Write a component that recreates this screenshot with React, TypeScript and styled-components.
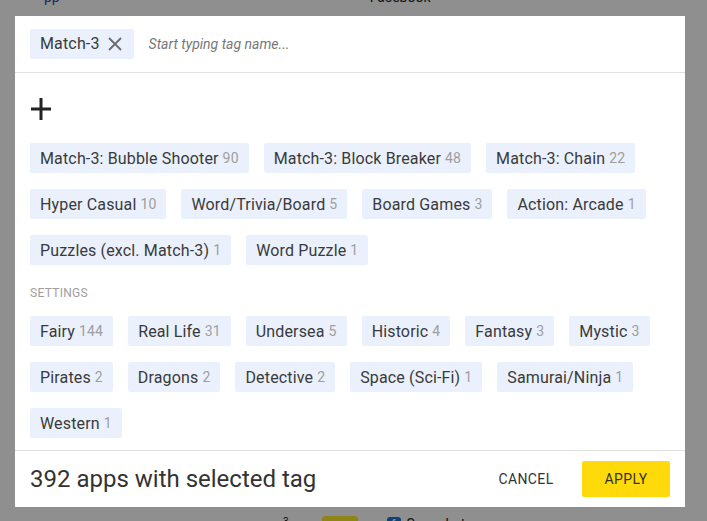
import React from 'react';
import styled, { createGlobalStyle } from 'styled-components';

type Tag = { name: string; count: number };

const genres: Tag[] = [
  { name: 'Match-3: Bubble Shooter', count: 90 },
  { name: 'Match-3: Block Breaker', count: 48 },
  { name: 'Match-3: Chain', count: 22 },
  { name: 'Hyper Casual', count: 10 },
  { name: 'Word/Trivia/Board', count: 5 },
  { name: 'Board Games', count: 3 },
  { name: 'Action: Arcade', count: 1 },
  { name: 'Puzzles (excl. Match-3)', count: 1 },
  { name: 'Word Puzzle', count: 1 },
];

const settings: Tag[] = [
  { name: 'Fairy', count: 144 },
  { name: 'Real Life', count: 31 },
  { name: 'Undersea', count: 5 },
  { name: 'Historic', count: 4 },
  { name: 'Fantasy', count: 3 },
  { name: 'Mystic', count: 3 },
  { name: 'Pirates', count: 2 },
  { name: 'Dragons', count: 2 },
  { name: 'Detective', count: 2 },
  { name: 'Space (Sci-Fi)', count: 1 },
  { name: 'Samurai/Ninja', count: 1 },
  { name: 'Western', count: 1 },
];

const App: React.FC = () => {
  return (
    <>
      <GlobalStyle />
      <Page>
        <PageRow>
          <BlueText>pp</BlueText>
          <DarkText style={{ marginLeft: 310 }}>Facebook</DarkText>
        </PageRow>
        <PageRow>
          <Sup style={{ marginLeft: 283 }}>3</Sup>
          <Arrow>▲</Arrow>
          <YellowBox />
          <Play>▶</Play>
          <AppIcon>f</AppIcon>
          <DarkText>Snapchat</DarkText>
        </PageRow>
      </Page>

      <Overlay>
        <Dialog>
          <Header>
            <SelectedChip>
              Match-3
              <svg width='14' height='14' viewBox='0 0 14 14'>
                <path d='M1 1 L13 13 M13 1 L1 13' stroke='#6b6b6b' strokeWidth='1.8' fill='none' />
              </svg>
            </SelectedChip>
            <SearchInput placeholder='Start typing tag name...' />
          </Header>

          <Body>
            <PlusIcon width='20' height='22' viewBox='0 0 20 22'>
              <path d='M0 11 H20 M10 0 V22' stroke='#222' strokeWidth='3' fill='none' />
            </PlusIcon>
            <ChipList>
              {genres.map((t) => (
                <Chip key={t.name}>
                  {t.name}
                  <Count>{t.count}</Count>
                </Chip>
              ))}
            </ChipList>
            <GroupLabel>Settings</GroupLabel>
            <ChipList>
              {settings.map((t) => (
                <Chip key={t.name}>
                  {t.name}
                  <Count>{t.count}</Count>
                </Chip>
              ))}
            </ChipList>
          </Body>

          <Footer>
            <Summary>392 apps with selected tag</Summary>
            <Actions>
              <TextButton>Cancel</TextButton>
              <ApplyButton>Apply</ApplyButton>
            </Actions>
          </Footer>
        </Dialog>
      </Overlay>
    </>
  );
};

export default App;

const GlobalStyle = createGlobalStyle`
  html, body {
    margin: 0;
    padding: 0;
    background: #fff;
    font-family: Roboto, 'Liberation Sans', sans-serif;
    overflow: hidden;
  }
  * {
    box-sizing: border-box;
  }
`;

const Page = styled.div`
  height: 100vh;
  display: flex;
  flex-direction: column;
  justify-content: space-between;
`;
const PageRow = styled.div`
  display: flex;
  align-items: center;
  height: 16px;
  font-size: 14px;
  &:first-child {
    margin-top: -11px;
  }
  &:last-child {
    margin-bottom: -11px;
  }
`;
const BlueText = styled.span`
  margin-left: 44px;
  color: #2a4fb0;
`;
const DarkText = styled.span`
  color: #222;
`;
const Sup = styled.span`
  color: #222;
  font-size: 10px;
  align-self: flex-start;
`;
const Arrow = styled.span`
  color: #1b8a2a;
  font-size: 10px;
  margin-left: 3px;
`;
const YellowBox = styled.span`
  width: 36px;
  height: 16px;
  margin-left: 20px;
  border-radius: 3px;
  background: #ffec2c;
`;
const Play = styled.span`
  color: #1f9a7a;
  margin-left: 15px;
  font-size: 13px;
`;
const AppIcon = styled.span`
  width: 14px;
  height: 14px;
  border-radius: 3px;
  background: #1c74d6;
  color: #fff;
  font-size: 11px;
  font-weight: 700;
  text-align: center;
  line-height: 14px;
  margin: 0 6px 0 4px;
`;

const Overlay = styled.div`
  position: fixed;
  inset: 0;
  background: rgba(0, 0, 0, 0.44);
  padding: 16px 0 0 15px;
`;
const Dialog = styled.div`
  width: 670px;
  height: 491px;
  background: #fff;
  display: flex;
  flex-direction: column;
`;
const Header = styled.div`
  height: 57px;
  flex-shrink: 0;
  display: flex;
  align-items: center;
  gap: 15px;
  padding: 0 15px 1px;
  border-bottom: 1px solid #e0e0e0;
`;
const SelectedChip = styled.div`
  height: 30px;
  display: flex;
  align-items: center;
  gap: 8px;
  padding: 0 12px 0 10px;
  background: #eaf1fc;
  border-radius: 2px;
  font-size: 16px;
  letter-spacing: 0.15px;
  color: #3a3a3a;
`;
const SearchInput = styled.input`
  flex: 1;
  border: none;
  outline: none;
  font-family: Roboto, 'Liberation Sans', sans-serif;
  font-size: 14px;
  font-style: italic;
  color: #333;
  padding: 0;
  &::placeholder {
    color: #777;
  }
`;
const Body = styled.div`
  flex: 1;
  overflow-y: scroll;
  padding: 25px 7px 10px 15px;
  &::-webkit-scrollbar {
    width: 8px;
  }
  &::-webkit-scrollbar-track {
    background: #e4e4e4;
  }
  &::-webkit-scrollbar-thumb {
    background: #e4e4e4;
  }
`;
const PlusIcon = styled.svg`
  display: block;
  margin: 0 0 23px 1px;
`;
const ChipList = styled.div`
  display: flex;
  flex-wrap: wrap;
  gap: 16px 15px;
`;
const Chip = styled.div`
  height: 30px;
  display: flex;
  align-items: center;
  padding: 0 10px;
  background: #eaf1fc;
  border-radius: 2px;
  font-size: 16px;
  letter-spacing: 0.15px;
  color: #3a3a3a;
  white-space: nowrap;
`;
const Count = styled.span`
  margin-left: 4px;
  font-size: 14px;
  letter-spacing: 0.15px;
  color: #9e9e9e;
`;
const GroupLabel = styled.div`
  margin: 20px 0 15px;
  font-size: 12px;
  line-height: 16px;
  letter-spacing: 0.3px;
  text-transform: uppercase;
  color: #9e9e9e;
`;
const Footer = styled.div`
  height: 57px;
  flex-shrink: 0;
  display: flex;
  align-items: center;
  justify-content: space-between;
  padding: 0 15px;
  border-top: 1px solid #e0e0e0;
`;
const Summary = styled.div`
  font-size: 24px;
  color: #333;
`;
const Actions = styled.div`
  display: flex;
  gap: 12px;
`;
const TextButton = styled.button`
  width: 88px;
  height: 36px;
  border: none;
  background: transparent;
  border-radius: 2px;
  font-family: Roboto, 'Liberation Sans', sans-serif;
  font-size: 14px;
  letter-spacing: 0.4px;
  text-transform: uppercase;
  color: #333;
  cursor: pointer;
`;
const ApplyButton = styled(TextButton)`
  background: #ffda0a;
`;
